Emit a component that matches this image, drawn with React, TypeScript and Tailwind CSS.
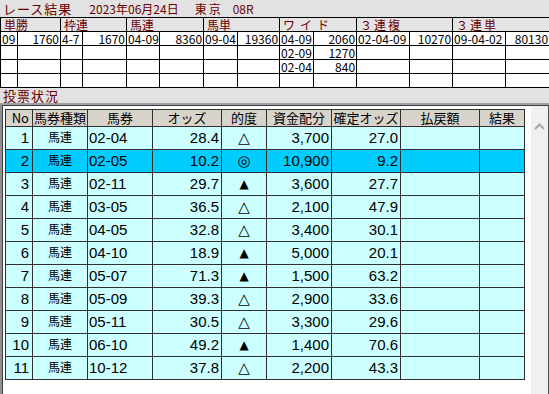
import React from "react";

type Bet = {
  no: number;
  kind: string;
  combo: string;
  odds: string;
  mark: string;
  stake: string;
  fixed: string;
};

const bets: Bet[] = [
  { no: 1, kind: "馬連", combo: "02-04", odds: "28.4", mark: "△", stake: "3,700", fixed: "27.0" },
  { no: 2, kind: "馬連", combo: "02-05", odds: "10.2", mark: "◎", stake: "10,900", fixed: "9.2" },
  { no: 3, kind: "馬連", combo: "02-11", odds: "29.7", mark: "▲", stake: "3,600", fixed: "27.7" },
  { no: 4, kind: "馬連", combo: "03-05", odds: "36.5", mark: "△", stake: "2,100", fixed: "47.9" },
  { no: 5, kind: "馬連", combo: "04-05", odds: "32.8", mark: "△", stake: "3,400", fixed: "30.1" },
  { no: 6, kind: "馬連", combo: "04-10", odds: "18.9", mark: "▲", stake: "5,000", fixed: "20.1" },
  { no: 7, kind: "馬連", combo: "05-07", odds: "71.3", mark: "▲", stake: "1,500", fixed: "63.2" },
  { no: 8, kind: "馬連", combo: "05-09", odds: "39.3", mark: "△", stake: "2,900", fixed: "33.6" },
  { no: 9, kind: "馬連", combo: "05-11", odds: "30.5", mark: "△", stake: "3,300", fixed: "29.6" },
  { no: 10, kind: "馬連", combo: "06-10", odds: "49.2", mark: "▲", stake: "1,400", fixed: "70.6" },
  { no: 11, kind: "馬連", combo: "10-12", odds: "37.8", mark: "△", stake: "2,200", fixed: "43.3" },
];

// 印ごとに字形の大きさが違うので揃える
const markSize: Record<string, string> = {
  "△": "text-[15px]",
  "◎": "text-[15px]",
  "▲": "text-[12px]",
};

// 払戻結果: 券種ごとに [組番, 払戻] の2列
const payHeads = [
  { label: "単勝", cls: "" },
  { label: "枠連", cls: "" },
  { label: "馬連", cls: "" },
  { label: "馬単", cls: "" },
  { label: "ワイド", cls: "tracking-[5px]" },
  { label: "３連複", cls: "tracking-[2px]" },
  { label: "３連単", cls: "tracking-[2px]" },
];

const payCols = [17, 43, 22, 44, 33, 44, 34, 42, 34, 43, 53, 43, 53, 44];

const payRows: string[][] = [
  ["09", "1760", "4-7", "1670", "04-09", "8360", "09-04", "19360", "04-09", "2060", "02-04-09", "10270", "09-04-02", "80130"],
  ["", "", "", "", "", "", "", "", "02-09", "1270", "", "", "", ""],
  ["", "", "", "", "", "", "", "", "02-04", "840", "", "", "", ""],
  ["", "", "", "", "", "", "", "", "", "", "", "", "", ""],
];

const betCols = [
  { label: "No", w: 27, head: "text-right pr-[3px]", cell: "text-right pr-[3px] text-[15px]" },
  { label: "馬券種類", w: 55, head: "text-center", cell: "text-center text-[12px]" },
  { label: "馬券", w: 65, head: "text-center", cell: "text-left pl-[1px] text-[15px]" },
  { label: "オッズ", w: 69, head: "text-center", cell: "text-right pr-[2px] text-[15px]" },
  { label: "的度", w: 45, head: "text-center", cell: "text-center font-['DejaVu_Sans',sans-serif]" },
  { label: "資金配分", w: 65, head: "text-center", cell: "text-right pr-[2px] text-[15px]" },
  { label: "確定オッズ", w: 69, head: "text-center", cell: "text-right pr-[2px] text-[15px]" },
  { label: "払戻額", w: 79, head: "text-center", cell: "" },
  { label: "結果", w: 45, head: "text-center", cell: "" },
];

function PayoutTable() {
  return (
    <table className="table-fixed border-collapse w-[549px] text-[12px] leading-[12px] font-['Noto_Sans_CJK_JP',sans-serif]">
      <colgroup>
        {payCols.map((w, i) => (
          <col key={i} style={{ width: w }} />
        ))}
      </colgroup>
      <thead>
        <tr>
          {payHeads.map((h) => (
            <th
              key={h.label}
              colSpan={2}
              className={`h-[14px] border border-black bg-[#e4e4e4] p-0 pl-[3px] text-left align-middle font-normal text-[12px] leading-[12px] text-[#6b0000] ${h.cls}`}
            >
              {h.label}
            </th>
          ))}
        </tr>
      </thead>
      <tbody>
        {payRows.map((row, r) => (
          <tr key={r}>
            {row.map((v, c) => (
              <td
                key={c}
                className={`h-[14px] border border-black bg-white p-0 text-black ${
                  c % 2 === 0 ? "text-left pl-[1px]" : "text-right pr-[1px]"
                }`}
              >
                {v}
              </td>
            ))}
          </tr>
        ))}
      </tbody>
    </table>
  );
}

function BetTable() {
  return (
    <table className="table-fixed border-collapse w-[519px] font-['Liberation_Sans','Noto_Sans_CJK_JP',sans-serif] text-black">
      <colgroup>
        {betCols.map((c) => (
          <col key={c.label} style={{ width: c.w }} />
        ))}
      </colgroup>
      <thead>
        <tr>
          {betCols.map((c) => (
            <th
              key={c.label}
              className={`h-[17px] border border-[#303030] bg-[#d8d4cc] p-0 text-[13px] leading-[14px] font-normal font-['Noto_Sans_CJK_JP',sans-serif] ${c.head}`}
            >
              {c.label}
            </th>
          ))}
        </tr>
      </thead>
      <tbody>
        {bets.map((b) => {
          const vals = [String(b.no), b.kind, b.combo, b.odds, b.mark, b.stake, b.fixed, "", ""];
          return (
            <tr key={b.no} className={b.no === 2 ? "bg-[#00ccff]" : "bg-[#ccffff]"}>
              {vals.map((v, i) => (
                <td
                  key={i}
                  className={`h-[23px] border border-[#303030] p-0 leading-[20px] ${betCols[i].cell} ${
                    i === 4 ? markSize[v] : ""
                  }`}
                >
                  {v}
                </td>
              ))}
            </tr>
          );
        })}
      </tbody>
    </table>
  );
}

export default function App() {
  return (
    <div className="w-[549px] h-[394px] overflow-hidden bg-[#e2e2e2] flex flex-col font-['Noto_Sans_CJK_JP',sans-serif]">
      {/* タイトル行 */}
      <div className="h-[17px] flex items-center text-[13px] leading-[15px] text-[#6b0000]">
        <span className="ml-[3px] tracking-[1px]">レース結果</span>
        <span className="ml-[17px] text-[12px]">2023年06月24日</span>
        <span className="ml-[16px] text-[12px] tracking-[2px]">東京</span>
        <span className="ml-[10px] text-[12px]">08R</span>
      </div>

      <PayoutTable />

      <div className="h-[15px] pl-[3px] flex items-center text-[13px] leading-[15px] tracking-[1px] text-[#6b0000]">
        投票状況
      </div>

      {/* 投票状況パネル */}
      <div className="flex-1 flex border-t-2 border-l-2 border-t-[#a0a0a0] border-l-[#909090]">
        <div className="flex-1 flex flex-col border-t border-l border-[#404040] bg-white pt-[3px] pl-[2px]">
          <BetTable />
        </div>
        <div className="w-[18px] bg-[#f0f0f0] flex flex-col items-center pt-[17px] border-t border-[#404040] border-r border-r-[#505050]">
          <svg width="11" height="7" viewBox="0 0 11 7">
            <polyline points="1,6 5.5,1.5 10,6" fill="none" stroke="#a8a8a8" strokeWidth="2" />
          </svg>
        </div>
      </div>
    </div>
  );
}
